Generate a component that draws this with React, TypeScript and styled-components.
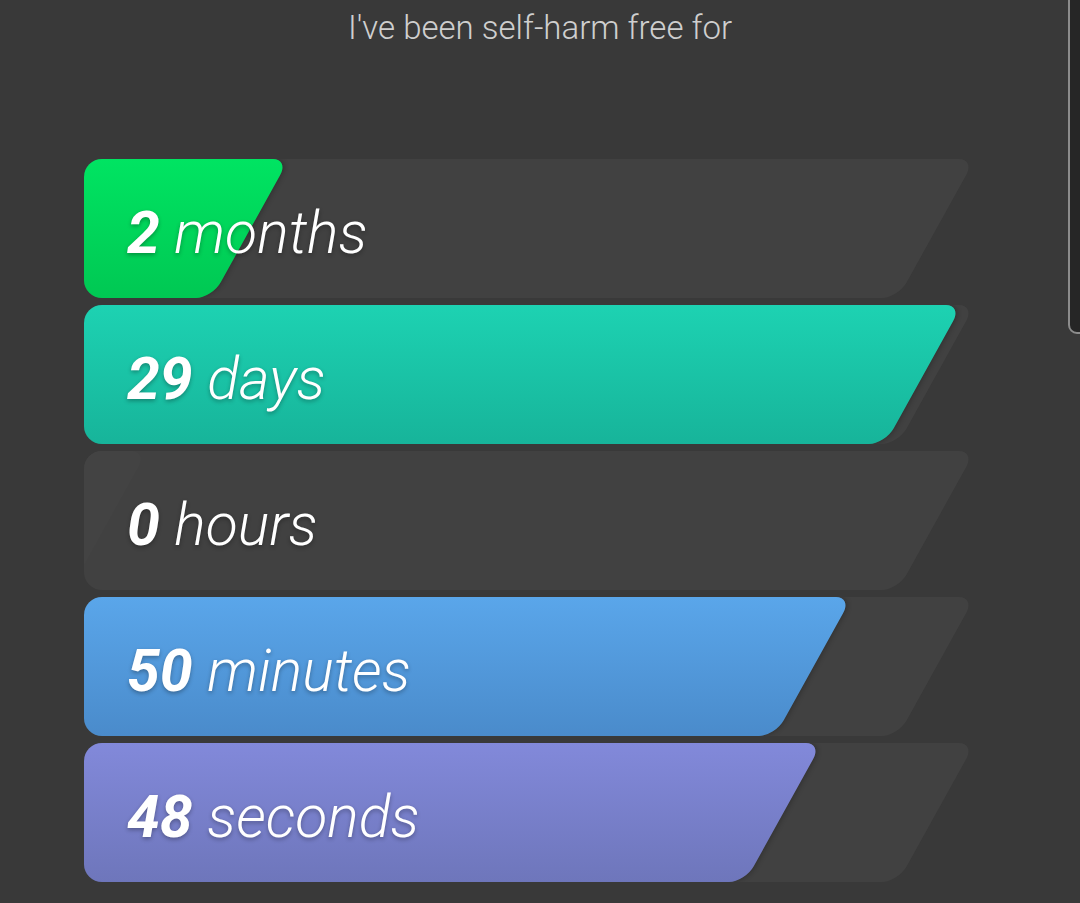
import React from "react";
import styled, { createGlobalStyle } from "styled-components";

const Global = createGlobalStyle`
  html, body { margin: 0; padding: 0; background: #393939; }
  body { font-family: Roboto, "Noto Sans", sans-serif; }
`;

const Page = styled.div`
  position: relative;
  width: 1080px;
  height: 903px;
  overflow: hidden;
  background: #393939;
  display: flex;
  flex-direction: column;
  align-items: flex-start;
`;

const Heading = styled.div`
  width: 100%;
  text-align: center;
  font-family: Roboto, sans-serif;
  font-weight: 300;
  font-size: 33px;
  line-height: 56px;
  color: #cfcfcf;
`;

const List = styled.div`
  display: flex;
  flex-direction: column;
  gap: 7px;
  margin-top: 103px;
  margin-left: 84px;
`;

const Row = styled.div`
  display: grid;
  width: 886px;
  height: 139px;
  border-radius: 18px 0 0 18px;
  overflow: hidden;
`;

const Track = styled.div`
  grid-area: 1 / 1;
  margin-left: -80px;
  width: 894px;
  height: 139px;
  background: #414141;
  border-radius: 0 16px 16px 0;
  transform: skewX(-29deg);
  transform-origin: bottom left;
  display: flex;
`;

const Fill = styled.div<{ $from: string; $to: string; $w: number; $flat?: boolean }>`
  width: ${(p) => p.$w}px;
  height: 100%;
  background: linear-gradient(to bottom, ${(p) => p.$from}, ${(p) => p.$to});
  border-radius: 0 16px 16px 0;
  box-shadow: ${(p) => (p.$flat ? "none" : "2px 0 5px rgba(0, 0, 0, 0.22)")};
`;

const Label = styled.div`
  grid-area: 1 / 1;
  position: relative;
  z-index: 1;
  align-self: center;
  padding-left: 43px;
  padding-top: 8px;
  font-family: Roboto, sans-serif;
  font-style: italic;
  font-size: 59px;
  line-height: 1;
  color: #ffffff;
  text-shadow: 0 2px 4px rgba(0, 0, 0, 0.3);
  white-space: nowrap;
`;

const Num = styled.span`
  font-weight: 700;
`;

const Unit = styled.span`
  font-weight: 300;
`;

const Scrollbar = styled.div`
  position: absolute;
  right: -10px;
  top: -20px;
  width: 18px;
  height: 350px;
  border: 2px solid #8c8c8c;
  border-radius: 9px;
  background: #262626;
`;

const rows = [
  { n: "2", unit: "months", w: 208, from: "#00e462", to: "#00c853" },
  { n: "29", unit: "days", w: 881, from: "#1dd2b2", to: "#17b49a" },
  { n: "0", unit: "hours", w: 66, from: "#434343", to: "#434343", flat: true },
  { n: "50", unit: "minutes", w: 771, from: "#5aa6ea", to: "#4a8bcb" },
  { n: "48", unit: "seconds", w: 741, from: "#8289da", to: "#6e76bb" },
];

export default function App() {
  return (
    <Page>
      <Global />
      <Heading>I've been self-harm free for</Heading>
      <List>
        {rows.map((r) => (
          <Row key={r.unit}>
            <Track>
              <Fill $w={r.w} $from={r.from} $to={r.to} $flat={r.flat} />
            </Track>
            <Label>
              <Num>{r.n}</Num> <Unit>{r.unit}</Unit>
            </Label>
          </Row>
        ))}
      </List>
      <Scrollbar />
    </Page>
  );
}
